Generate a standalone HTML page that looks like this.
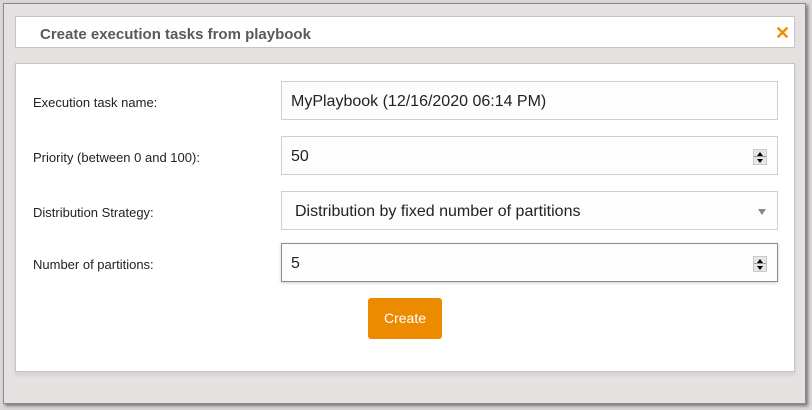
<!DOCTYPE html>
<html><head><meta charset="utf-8"><style>
*{box-sizing:border-box;margin:0;padding:0}
body{width:812px;height:410px;background:#d9d7d6;position:relative;overflow:hidden;font-family:"Liberation Sans",Arial,sans-serif}
.frame{position:absolute;left:3px;top:3px;width:803px;height:401px;background:#e4e1e0;border:1px solid #8a8a8a;box-shadow:2px 2px 3px #777}
.hdr{position:absolute;left:15px;top:16px;width:780px;height:32px;background:#fff;border:1px solid #c4c4c4}
.hdr span{position:absolute;left:24px;top:9px;font-size:15px;font-weight:bold;color:#5a5a5a}
.x{position:absolute;left:775px;top:24px;color:#ef8c00;font-size:18px;font-weight:bold;line-height:18px}
.body{position:absolute;left:15px;top:63px;width:780px;height:309px;background:#fff;border:1px solid #c4c4c4;box-shadow:0 3px 4px rgba(0,0,0,.08)}
.lbl{position:absolute;left:33px;font-size:13px;color:#222}
.inp{position:absolute;left:281px;width:497px;height:39px;background:#fdfdfd;border:1px solid #cfcfcf;font-size:16px;color:#222;padding:11px 0 0 9px}
.inp.act{border-color:#8c8c8c;box-shadow:0 1px 3px rgba(0,0,0,.2)}
.spin{position:absolute;right:10px;top:12px;width:14px;height:16px;background:#e6e6e6;border:1px solid #c9c9c9}
.spin:before{content:"";position:absolute;left:3px;top:2px;border:3px solid transparent;border-bottom:4px solid #000;border-top:0}
.spin:after{content:"";position:absolute;left:3px;top:9px;border:3px solid transparent;border-top:4px solid #000;border-bottom:0}
.spin i{position:absolute;left:0;top:6px;width:12px;height:1px;background:#999}
.dd{position:absolute;right:11px;top:17px;border:4px solid transparent;border-top:6px solid #888;border-bottom:0}
.btn{position:absolute;left:368px;top:298px;width:74px;height:41px;background:#ed8b00;border-radius:3px;color:#fff;font-size:14px;text-align:center;line-height:41px}
</style></head><body>
<div class="frame"></div>
<div class="hdr"><span>Create execution tasks from playbook</span></div>
<div class="x">✕</div>
<div class="body"></div>
<div class="lbl" style="top:95px">Execution task name:</div>
<div class="inp" style="top:81px">MyPlaybook (12/16/2020 06:14 PM)</div>
<div class="lbl" style="top:150px">Priority (between 0 and 100):</div>
<div class="inp" style="top:136px">50<div class="spin"><i></i></div></div>
<div class="lbl" style="top:205px">Distribution Strategy:</div>
<div class="inp" style="top:191px;padding-left:13px">Distribution by fixed number of partitions<div class="dd"></div></div>
<div class="lbl" style="top:257px">Number of partitions:</div>
<div class="inp act" style="top:243px">5<div class="spin"><i></i></div></div>
<div class="btn">Create</div>
</body></html>
